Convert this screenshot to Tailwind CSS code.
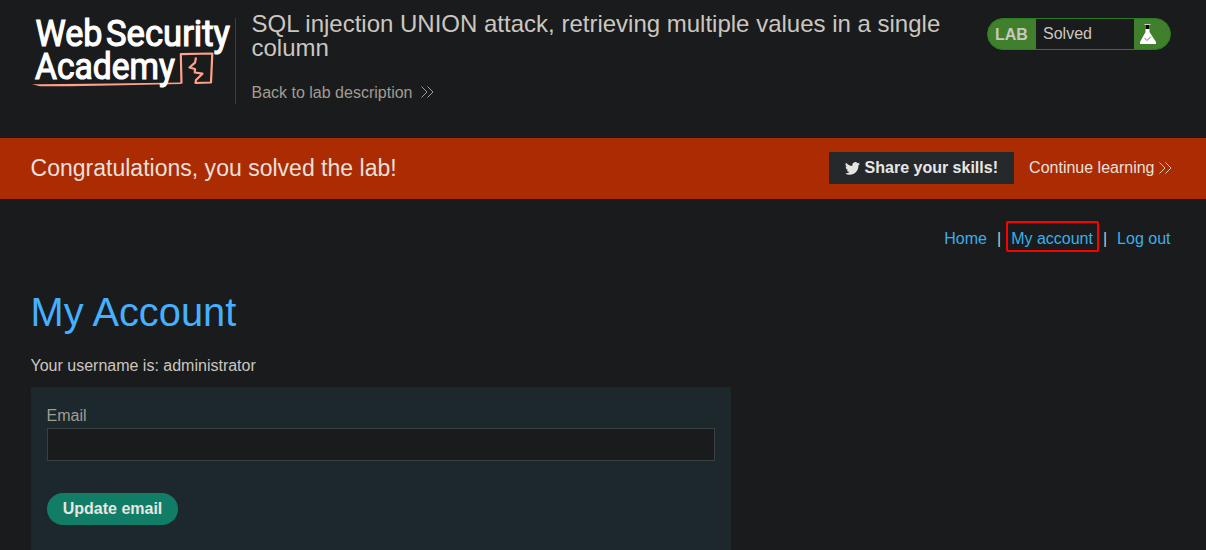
<!DOCTYPE html>
<html lang="en">
<head>
<meta charset="utf-8">
<title>Web Security Academy</title>
<script src="https://cdn.jsdelivr.net/npm/@tailwindcss/browser@4"></script>
</head>
<body class="h-[550px] overflow-hidden bg-[#1a1b1c] font-['Liberation_Sans',Arial,sans-serif] text-base text-[#cbc7c0]">
<header class="flex h-[138px] items-start">
  <svg class="ml-[30px] mt-[10px] h-[84px] w-[205px] shrink-0 overflow-visible" viewBox="30 10 205 84" fill="none">
    <g fill="#fff" stroke="#fff" stroke-width="1.200" font-family="Roboto, sans-serif" font-size="37">
      <text x="35.500" y="46" textLength="67" lengthAdjust="spacingAndGlyphs">Web</text>
      <text x="106" y="46" textLength="124" lengthAdjust="spacingAndGlyphs">Security</text>
    </g>
    <path d="M40 84.300L110 83.600L181.300 82.500L181.300 84L110 85.500L70 86.200L40 86.200L32 84.300Z" fill="#ffa08a"/>
    <path d="M181.500 83.500L180.800 54.200L212.300 53.500L211 82.500L195.500 83L196 80L202.500 73.700L194.800 72.500L195 69L189.500 67.500L195 62.700L196 57.500" stroke="#ffa08a" stroke-width="2.200" stroke-linejoin="round"/>
    <text x="35" y="78.500" textLength="140" lengthAdjust="spacingAndGlyphs" fill="#fff" stroke="#fff" stroke-width="1.200" font-family="Roboto, sans-serif" font-size="37">Academy</text>
  </svg>
  <div class="mt-[18px] h-[86px] w-px shrink-0 bg-[#3b3f41]"></div>
  <div class="ml-[15.500px] w-[715px] pt-3">
    <h2 class="text-2xl leading-6">SQL injection UNION attack, retrieving multiple values in a single column</h2>
    <a class="mt-[21px] flex items-center gap-[9px] leading-6 text-[#a29c91]">Back to lab description
      <svg class="mb-0.5 h-3 w-[13px]" viewBox="0 0 13 12" fill="none" stroke="currentColor"><path d="M.5.5L6 6L.5 11.500M6.500.5L12 6L6.500 11.500"/></svg>
    </a>
  </div>
  <div class="ml-auto mr-[35px] mt-[18px] flex h-8 w-[184px] overflow-hidden rounded-full border border-[#2c7c25] bg-[#407f2b]">
    <span class="w-12 pl-[7px] font-bold leading-[31px]">LAB</span>
    <span class="w-[98px] bg-[#1a1b1c] pl-[7px] leading-[29px]">Solved</span>
    <svg class="ml-[5px] mt-[5px] h-5 w-[18px]" viewBox="0 0 18 20"><path d="M6.500 5H10.500V8L17 18V20H1V18L6.500 8Z" fill="#fff"/><path d="M7 1H10V5H7Z" fill="#000"/><path d="M5.500.5H11.500" stroke="#c9d9c4"/><path d="M5.500 14L8 16.500L12 12.500" fill="none" stroke="#777"/></svg>
  </div>
</header>
<section class="flex h-[61px] items-center bg-[#ab2b02] pl-[30.500px] pr-[34.500px] text-[#e8e0dc]">
  <p class="text-[23.040px]">Congratulations, you solved the lab!</p>
  <a class="mb-px ml-auto flex h-8 w-[185px] items-center bg-[#26292b] pl-4 font-bold text-[#e8e6e3]">
    <svg class="mr-[4.500px] mt-px h-[13px] w-[15px]" viewBox="0 2 24 20" preserveAspectRatio="none" fill="currentColor"><path d="M24 4.600a10 10 0 0 1-2.800.8 5 5 0 0 0 2.100-2.700 10 10 0 0 1-3.100 1.200A4.900 4.900 0 0 0 11.800 8.300C7.700 8.100 4.100 6.100 1.700 3.100a4.900 4.900 0 0 0 1.500 6.600A5 5 0 0 1 1 9.100v.1a4.900 4.900 0 0 0 3.900 4.800 5 5 0 0 1-2.200.1 4.900 4.900 0 0 0 4.600 3.400A9.900 9.900 0 0 1 0 19.500 14 14 0 0 0 7.500 21.700C16.600 21.700 21.900 14 21.500 7.100A10 10 0 0 0 24 4.600Z"/></svg>
    Share your skills!
  </a>
  <a class="mb-px ml-[15px] flex items-center gap-1">Continue learning
    <svg class="h-3 w-[13px]" viewBox="0 0 13 12" fill="none" stroke="currentColor" stroke-width=".9"><path d="M.5.5L6 6L.5 11.500M6.500.5L12 6L6.500 11.500"/></svg>
  </a>
</section>
<nav class="mt-[22px] flex h-[31px] items-center justify-end pr-[35.500px] text-[#3daee9]">
  <a class="mt-1">Home</a><span class="ml-[10px] mt-1 w-[9px] text-[#cbc7c0]">|</span>
  <a class="flex h-[31px] w-[93px] items-center rounded-[2px] border-2 border-[#ff0000] pl-[3.200px] pt-1 whitespace-nowrap">My account</a>
  <span class="ml-1 mt-1 text-[#cbc7c0]">|</span><a class="ml-[10px] mt-1">Log out</a>
</nav>
<main class="ml-[30.500px]">
  <h1 class="mt-9 text-[39.800px] leading-[48px] text-[#45b0ff]">My Account</h1>
  <p class="mt-[18px] leading-6">Your username is: administrator</p>
  <form class="mt-[9px] h-[170px] w-[700px] rounded-[1px] bg-[#1d282c] px-4 pt-4">
    <label class="block leading-[25px] text-[#a29c91]">Email</label>
    <input class="block h-[33px] w-full border border-[#3a4144] bg-[#1a1b1c]">
    <button type="button" class="mt-8 h-8 w-[131px] rounded-full bg-[#127d66] pl-px font-bold text-[#e8e6e3]">Update email</button>
  </form>
</main>
</body>
</html>
